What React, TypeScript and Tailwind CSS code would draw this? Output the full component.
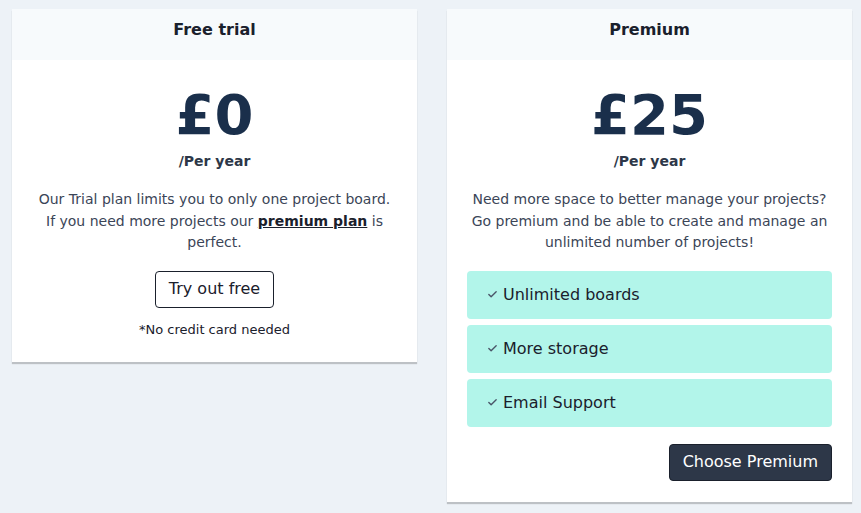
import { Check } from "lucide-react";

const features = ["Unlimited boards", "More storage", "Email Support"];

export default function App() {
  return (
    <div className="min-h-screen bg-[#edf2f7] font-['DejaVu_Sans',sans-serif] pl-[12px] pt-[9px]">
      <div className="flex items-start gap-[30px]">
        {/* Free trial */}
        <div className="w-[405px] bg-white shadow-[0_2px_1px_rgba(0,0,0,0.2)]">
          <div className="h-[51px] bg-[#f7fafc] pt-[9px] text-center">
            <h2 className="text-base leading-6 font-bold text-[#1a202c]">Free trial</h2>
          </div>
          <div className="px-5 pt-[25px] pb-[23px] flex flex-col items-center text-center">
            <div className="text-[56px] leading-[60px] font-bold text-[#1a2f4b]">£0</div>
            <div className="mt-[6px] text-sm leading-5 font-bold text-[#2d3748]">/Per year</div>
            <p className="mt-[18px] text-sm leading-[21.5px] text-[#3b4557]">
              Our Trial plan limits you to only one project board. If you need more projects our{" "}
              <a className="font-bold underline text-[#1a202c]">premium plan</a> is perfect.
            </p>
            <button className="mt-[17px] h-[37px] px-[13px] border border-[#1a202c] rounded text-base text-[#1a202c]">
              Try out free
            </button>
            <p className="mt-[13px] text-[13px] leading-[18px] text-[#1a202c]">*No credit card needed</p>
          </div>
        </div>

        {/* Premium */}
        <div className="w-[405px] bg-white shadow-[0_2px_1px_rgba(0,0,0,0.2)]">
          <div className="h-[51px] bg-[#f7fafc] pt-[9px] text-center">
            <h2 className="text-base leading-6 font-bold text-[#1a202c]">Premium</h2>
          </div>
          <div className="px-5 pt-[25px] pb-[21px] flex flex-col">
            <div className="text-center text-[56px] leading-[60px] font-bold text-[#1a2f4b]">£25</div>
            <div className="text-center mt-[6px] text-sm leading-5 font-bold text-[#2d3748]">/Per year</div>
            <p className="text-center mt-[18px] text-sm leading-[21.5px] text-[#3b4557]">
              Need more space to better manage your projects? Go premium and be able to create and manage an unlimited number of projects!
            </p>
            <ul className="mt-[17px] flex flex-col gap-[6px]">
              {features.map((f) => (
                <li
                  key={f}
                  className="h-[48px] rounded bg-[#b2f5ea] flex items-center pl-5 text-base text-[#1a202c]"
                >
                  <Check className="w-[11px] h-[11px] text-[#4a5568] mr-[5px]" strokeWidth={3} />
                  {f}
                </li>
              ))}
            </ul>
            <div className="mt-[17px] flex justify-end">
              <button className="h-[37px] px-[13px] rounded bg-[#2d3748] text-white text-base border border-[#1a202c]">
                Choose Premium
              </button>
            </div>
          </div>
        </div>
      </div>
    </div>
  );
}
